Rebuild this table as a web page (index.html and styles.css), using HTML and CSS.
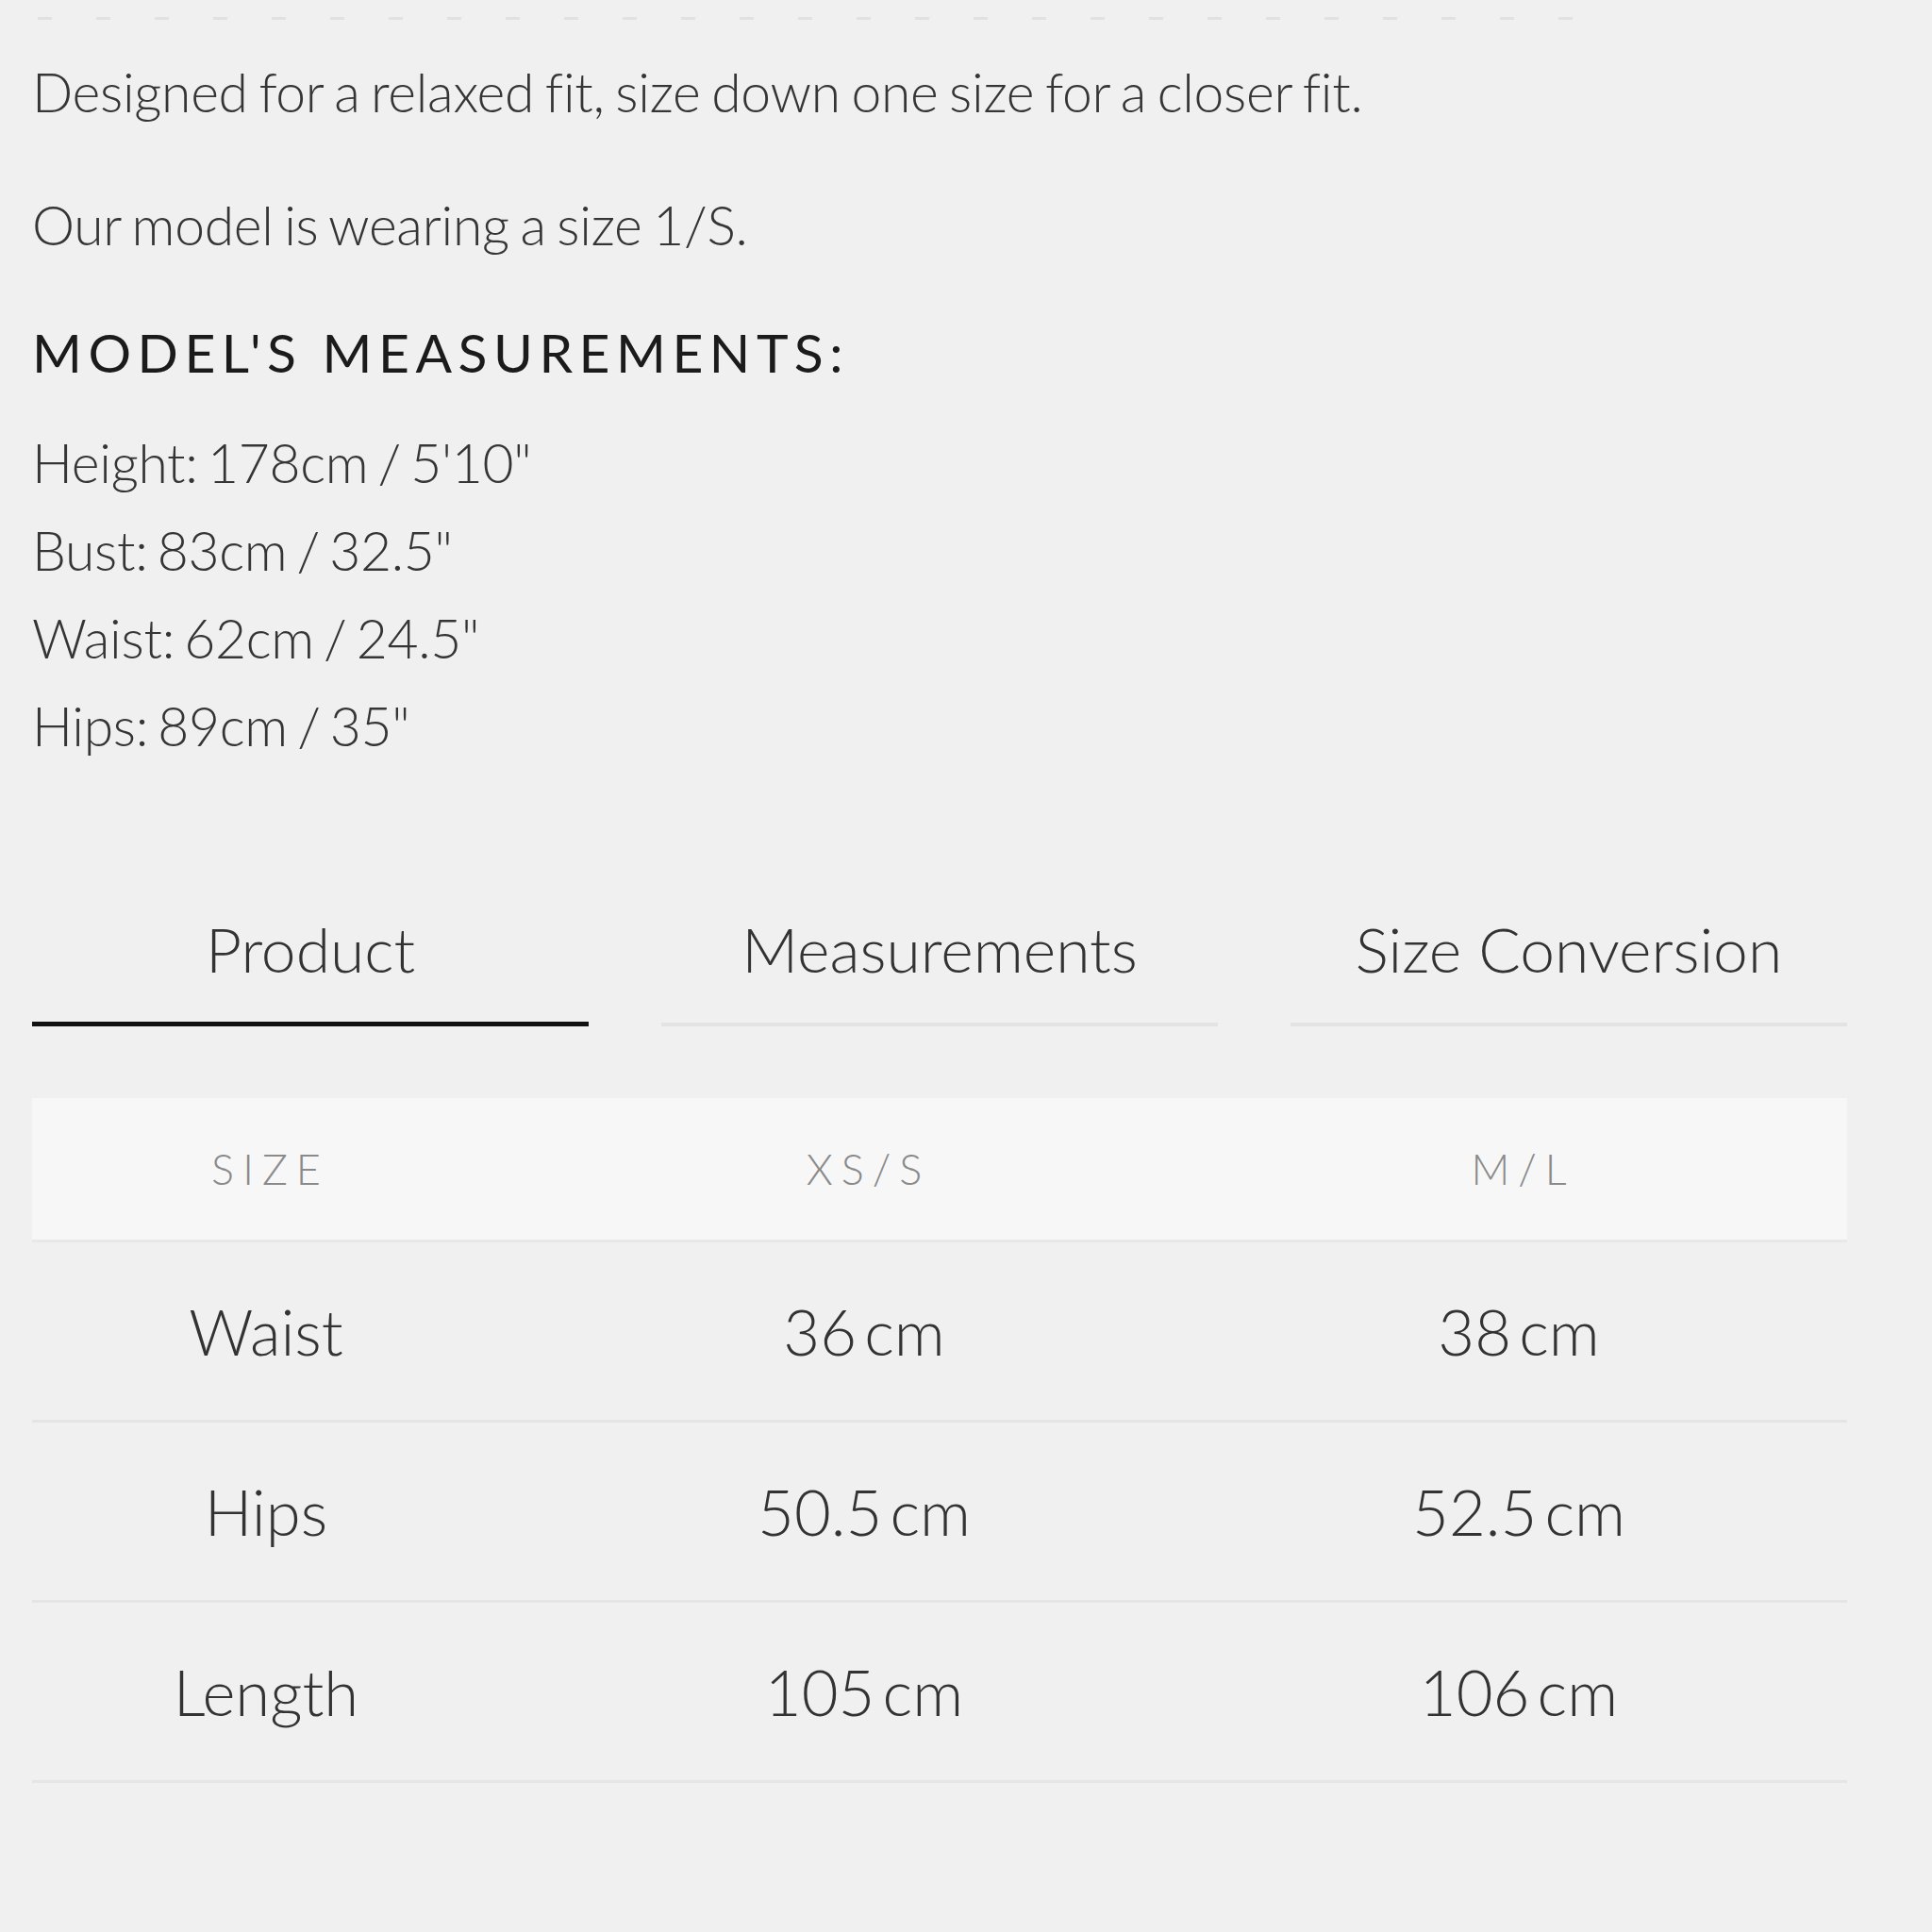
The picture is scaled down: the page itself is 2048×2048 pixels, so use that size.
FILE: index.html
```html
<!DOCTYPE html>
<html lang="en">
<head>
<meta charset="utf-8">
<title>Size guide</title>
<link rel="stylesheet" href="styles.css">
</head>
<body>
<div class="page">
  <div class="dashes"></div>
  <p class="note note-first">Designed for a relaxed fit, size down one size for a closer fit.</p>
  <p class="note note-second">Our model is wearing a size 1/S.</p>
  <h3 class="model-heading">MODEL'S MEASUREMENTS:</h3>
  <ul class="model-list">
    <li>Height: 178cm / 5'10"</li>
    <li>Bust: 83cm / 32.5"</li>
    <li>Waist: 62cm / 24.5"</li>
    <li>Hips: 89cm / 35"</li>
  </ul>

  <div class="tabs">
    <div class="tab tab-active">Product</div>
    <div class="tab">Measurements</div>
    <div class="tab">Size Conversion</div>
  </div>

  <div class="size-table">
    <div class="row row-head">
      <div class="cell">SIZE</div>
      <div class="cell">XS/S</div>
      <div class="cell cell-last">M/L</div>
    </div>
    <div class="row">
      <div class="cell">Waist</div>
      <div class="cell">36 cm</div>
      <div class="cell cell-last">38 cm</div>
    </div>
    <div class="row">
      <div class="cell">Hips</div>
      <div class="cell">50.5 cm</div>
      <div class="cell cell-last">52.5 cm</div>
    </div>
    <div class="row">
      <div class="cell">Length</div>
      <div class="cell">105 cm</div>
      <div class="cell cell-last">106 cm</div>
    </div>
  </div>
</div>
</body>
</html>
```

FILE: styles.css
```css
html, body {
  margin: 0;
  padding: 0;
  background: #f0f0f0;
}

body {
  font-family: Lato, "Open Sans", "Liberation Sans", sans-serif;
  color: #444;
}

.page {
  width: 1924px;
  padding: 18px 0 0 34px;
}

.dashes {
  margin-left: 6px;
  width: 1650px;
  height: 3px;
  background: repeating-linear-gradient(to right, #e1e1e1 0, #e1e1e1 15px, transparent 15px, transparent 62px);
}

.note {
  margin: 0;
  font-size: 57px;
  font-weight: 300;
  line-height: 93px;
  letter-spacing: -0.3px;
  word-spacing: -3.5px;
  color: #353535;
}

.note-first {
  margin-top: 30px;
}

.note-second {
  margin-top: 48px;
}

.model-heading {
  margin: 42px 0 0 0;
  font-size: 57px;
  line-height: 93px;
  font-weight: 400;
  letter-spacing: 6.5px;
  color: #1b1b1b;
}

.model-list {
  list-style: none;
  margin: 24px 0 0 0;
  padding: 0;
  font-size: 57px;
  font-weight: 300;
  line-height: 93px;
  letter-spacing: -0.3px;
  word-spacing: -5px;
  color: #353535;
}

.tabs {
  margin-top: 140px;
  display: grid;
  grid-template-columns: repeat(3, 1fr);
  column-gap: 77px;
}

.tab {
  text-align: center;
  font-size: 66px;
  font-weight: 300;
  line-height: 100px;
  color: #333;
  padding-bottom: 27px;
  border-bottom: 4px solid #e3e3e3;
}

.tab-active {
  border-bottom: 5px solid #111;
}

.size-table {
  margin-top: 76px;
}

.row {
  display: grid;
  grid-template-columns: 496fr 772fr 656fr;
  align-items: center;
  height: 188px;
  border-bottom: 3px solid #e5e5e5;
  font-size: 67px;
  font-weight: 300;
  word-spacing: -10px;
  color: #333;
}

.row-head {
  height: 150px;
  background: #f7f7f7;
  border-bottom: 3px solid #e8e8e8;
  font-size: 45px;
  letter-spacing: 9px;
  word-spacing: 0;
  color: #8a8a8a;
}

.cell {
  text-align: center;
}

.row-head .cell {
  padding-left: 9px;
}

.cell-last {
  padding-right: 40px;
}
```
